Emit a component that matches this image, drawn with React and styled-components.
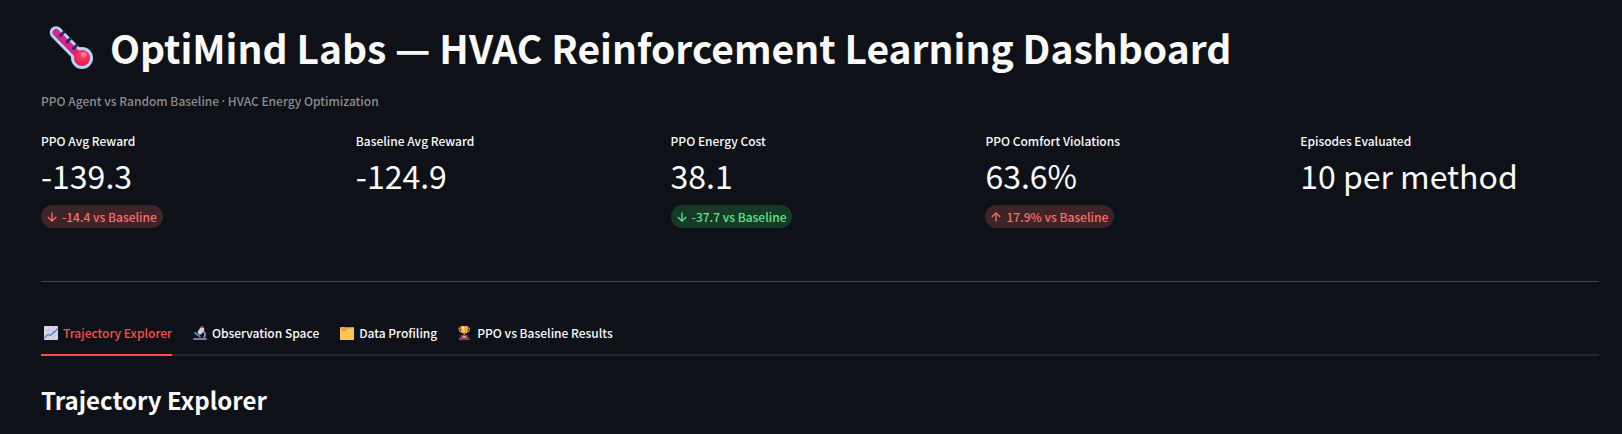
import React, { useState } from 'react';
import styled, { createGlobalStyle } from 'styled-components';

const metrics = [
  { label: 'PPO Avg Reward', value: '-139.3', delta: '-14.4 vs Baseline', direction: 'down', tone: 'red' },
  { label: 'Baseline Avg Reward', value: '-124.9' },
  { label: 'PPO Energy Cost', value: '38.1', delta: '-37.7 vs Baseline', direction: 'down', tone: 'green' },
  { label: 'PPO Comfort Violations', value: '63.6%', delta: '17.9% vs Baseline', direction: 'up', tone: 'red' },
  { label: 'Episodes Evaluated', value: '10 per method' },
];

const tones = {
  red: { background: '#3e2428', color: '#ff6c6c' },
  green: { background: '#173928', color: '#5ce488' },
};

const Thermometer = () => (
  <TitleIcon viewBox="0 0 44 44" aria-hidden="true">
    <defs>
      <linearGradient id="tube" x1="0" y1="0" x2="1" y2="1">
        <stop offset="0" stopColor="#cf2a86" />
        <stop offset="1" stopColor="#e81c7c" />
      </linearGradient>
      <radialGradient id="bulb" cx="0.55" cy="0.3" r="0.7">
        <stop offset="0" stopColor="#ff6f7c" />
        <stop offset="0.4" stopColor="#fb2f58" />
        <stop offset="1" stopColor="#e01a55" />
      </radialGradient>
    </defs>
    <path d="M7 7.5 L32 33" stroke="#aed8fb" strokeWidth="12.5" strokeLinecap="round" />
    <circle cx="33" cy="33" r="11" fill="#aed8fb" />
    <path d="M7 7.5 L32 33" stroke="url(#tube)" strokeWidth="7" strokeLinecap="round" />
    <circle cx="33" cy="33" r="8" fill="url(#bulb)" />
    <path
      d="M11.5 10.5 L15 7 M18 17 L21.5 13.5 M24.5 23.5 L28 20"
      stroke="#33265a"
      strokeWidth="3"
      strokeLinecap="round"
    />
    <ellipse cx="35" cy="29.5" rx="3" ry="2" fill="#ff9aa4" opacity="0.7" />
  </TitleIcon>
);

const ChartIcon = () => (
  <TabIcon viewBox="0 0 14 14" aria-hidden="true">
    <rect width="14" height="14" rx="1" fill="#ddd3e6" />
    <path d="M0 4.5H14M0 9H14M4.5 0V14M9.5 0V14" stroke="#c6bad4" strokeWidth="0.6" />
    <path d="M0.5 12 L4 8.5 L6.5 9.5 L9.5 6 L10.5 6.5 L13.5 2.5" fill="none" stroke="#3a93d8" strokeWidth="1.3" />
  </TabIcon>
);

const MicroscopeIcon = () => (
  <TabIcon viewBox="0 0 14 14" aria-hidden="true">
    <path d="M9.5 5 C12.5 6 12.8 9.5 10.8 12" fill="none" stroke="#8d84a0" strokeWidth="2" />
    <path d="M0.3 12 H13.7 V14 H0.3Z" fill="#8a7898" />
    <path d="M7 6.2 L9 3.2" stroke="#d3cfdd" strokeWidth="4.6" strokeLinecap="round" />
    <path d="M8.8 1.4 L9.6 0.6" stroke="#6d6780" strokeWidth="1.6" strokeLinecap="round" />
    <path d="M1.5 6.5 L7.5 11" stroke="#3d9de0" strokeWidth="1.6" />
  </TabIcon>
);

const FolderIcon = () => (
  <TabIcon viewBox="0 0 14 14" aria-hidden="true">
    <path d="M0 2 Q0 1 1 1 H13 Q14 1 14 2 V13 Q14 14 13 14 H1 Q0 14 0 13Z" fill="#f3a93a" />
    <path d="M5 1.6 H9" stroke="#5b9fb0" strokeWidth="1.2" />
    <path d="M9 1.6 H12.5" stroke="#7fa84a" strokeWidth="1.2" />
    <path d="M0 3.4 H6 L7.5 2.4 H14 V13 Q14 14 13 14 H1 Q0 14 0 13Z" fill="#fdc653" />
    <path d="M2 4.1 H6" stroke="#f0704f" strokeWidth="1.1" />
  </TabIcon>
);

const TrophyIcon = () => (
  <TabIcon viewBox="0 0 14 14" aria-hidden="true">
    <path d="M3 2 H1 Q1 6 4.5 6.5 M9.5 2 H11.5 Q11.5 6 8 6.5" fill="none" stroke="#e8953a" strokeWidth="1.1" />
    <path d="M2.6 0 H9.9 V3.5 Q9.5 7.5 6.25 7.5 Q3 7.5 2.6 3.5Z" fill="#f6a83c" />
    <path d="M4 0.6 H6.2 V6 Q4.2 5 4 0.6Z" fill="#ffd078" />
    <path d="M5.4 7 H7.1 V9.5 H5.4Z" fill="#d9802f" />
    <path d="M3 9 H9.5 L10 11.5 H11.5 V14 H1 V11.5 H2.5Z" fill="#7c4c5e" />
    <path d="M4.5 11 H8" stroke="#f4b04a" strokeWidth="1.6" />
  </TabIcon>
);

const DeltaArrow = ({ direction }) => (
  <ArrowIcon viewBox="0 0 12 12" aria-hidden="true">
    {direction === 'up' ? (
      <path d="M6 10.5 V2 M1.8 6 L6 1.8 L10.2 6" />
    ) : (
      <path d="M6 1.5 V10 M1.8 6 L6 10.2 L10.2 6" />
    )}
  </ArrowIcon>
);

const tabs = [
  { name: 'Trajectory Explorer', Icon: ChartIcon },
  { name: 'Observation Space', Icon: MicroscopeIcon },
  { name: 'Data Profiling', Icon: FolderIcon },
  { name: 'PPO vs Baseline Results', Icon: TrophyIcon },
];

const App = () => {
  const [active, setActive] = useState(tabs[0].name);

  return (
    <>
      <GlobalStyle />
      <Page>
        <Title>
          <Thermometer />
          OptiMind Labs — HVAC Reinforcement Learning Dashboard
        </Title>
        <Caption>
          PPO Agent vs Random Baseline <Dot>·</Dot> HVAC Energy Optimization
        </Caption>
        <Metrics>
          {metrics.map((metric) => (
            <Metric key={metric.label}>
              <MetricLabel>{metric.label}</MetricLabel>
              <MetricValue>{metric.value}</MetricValue>
              {metric.delta && (
                <Delta $tone={metric.tone}>
                  <DeltaArrow direction={metric.direction} />
                  {metric.delta}
                </Delta>
              )}
            </Metric>
          ))}
        </Metrics>
        <Divider />
        <TabList role="tablist">
          {tabs.map(({ name, Icon }) => (
            <Tab
              key={name}
              type="button"
              role="tab"
              aria-selected={active === name}
              $active={active === name}
              onClick={() => setActive(name)}
            >
              <Icon />
              {name}
            </Tab>
          ))}
        </TabList>
        <SectionTitle>{active}</SectionTitle>
      </Page>
    </>
  );
};

const GlobalStyle = createGlobalStyle`
  * {
    box-sizing: border-box;
  }

  body {
    margin: 0;
    background: #0e1117;
    color: #fafafa;
    font-family: 'Noto Sans CJK SC', 'Noto Sans', sans-serif;
    font-size: 12px;
    font-weight: 500;
    line-height: 20px;
  }
`;

const Page = styled.main`
  padding: 21px 23px 16px 41px;
`;

const Title = styled.h1`
  display: flex;
  align-items: center;
  gap: 17px;
  margin: 0;
  padding-left: 8px;
  font-size: 39px;
  font-weight: 700;
  line-height: 52px;
`;

const TitleIcon = styled.svg`
  flex: none;
  width: 44px;
  height: 44px;
`;

const Caption = styled.p`
  margin: 18px 0 19px;
  color: #8b8c8f;
`;

const Dot = styled.span`
  font-family: 'Noto Sans', sans-serif;
`;

const Metrics = styled.section`
  display: grid;
  grid-template-columns: repeat(5, 1fr);
  gap: 16px;
`;

const Metric = styled.div`
  min-width: 0;
`;

const MetricLabel = styled.div`
  line-height: 20px;
`;

const MetricValue = styled.div`
  margin: 2px 0 8px;
  font-size: 32px;
  font-weight: 400;
  line-height: 44px;
`;

const Delta = styled.div`
  display: inline-flex;
  align-items: center;
  gap: 4px;
  height: 23px;
  padding: 0 6px 0 5px;
  border-radius: 12px;
  background: ${({ $tone }) => tones[$tone].background};
  color: ${({ $tone }) => tones[$tone].color};
`;

const ArrowIcon = styled.svg`
  width: 12px;
  height: 12px;
  fill: none;
  stroke: currentColor;
  stroke-width: 1.3;
`;

const Divider = styled.hr`
  margin: 53px 0 40px;
  border: 0;
  border-top: 1px solid #42444a;
`;

const TabList = styled.div`
  display: flex;
  gap: 18px;
  box-shadow: inset 0 -2px #26272c;
`;

const Tab = styled.button`
  display: flex;
  align-items: center;
  gap: 5px;
  height: 34px;
  padding: 0 0 11px 3px;
  border: 0;
  border-bottom: 2px solid ${({ $active }) => ($active ? '#ff4b4b' : 'transparent')};
  background: none;
  color: ${({ $active }) => ($active ? '#ff4b4b' : '#fafafa')};
  font: inherit;
  cursor: pointer;
`;

const TabIcon = styled.svg`
  width: 14px;
  height: 14px;
`;

const SectionTitle = styled.h2`
  margin: 27px 0 0;
  font-size: 24px;
  font-weight: 600;
  line-height: 34px;
`;

export default App;
